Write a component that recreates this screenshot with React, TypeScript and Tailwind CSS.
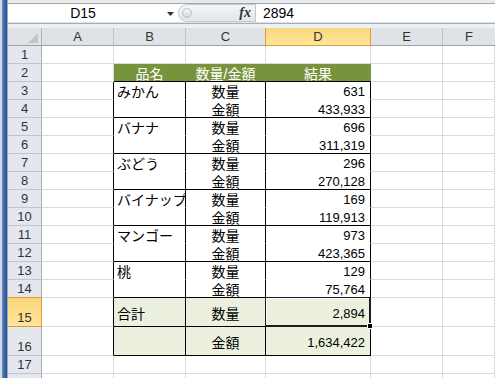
import React from 'react';

type Line = [string, string, string];

const data: Line[] = [
  ['みかん', '数量', '631'],
  ['', '金額', '433,933'],
  ['バナナ', '数量', '696'],
  ['', '金額', '311,319'],
  ['ぶどう', '数量', '296'],
  ['', '金額', '270,128'],
  ['バイナップル', '数量', '169'],
  ['', '金額', '119,913'],
  ['マンゴー', '数量', '973'],
  ['', '金額', '423,365'],
  ['桃', '数量', '129'],
  ['', '金額', '75,764'],
];

const RowHead: React.FC<{ n: number; tall?: boolean; sel?: boolean; orangeBottom?: boolean }> = ({ n, tall, sel, orangeBottom }) => (
  <div
    className={
      'flex w-[34px] shrink-0 items-end justify-center border-r border-b pb-[1px] text-[13px] leading-[14px] text-[#333] ' +
      (tall ? 'h-[29px] ' : 'h-[18px] ') +
      (sel
        ? 'border-r-[#e29a35] border-b-[#e29a35] bg-gradient-to-b from-[#f9d67a] to-[#ffe69b]'
        : orangeBottom
        ? 'border-r-[#a7abb0] border-b-[#e29a35] bg-[#e4e8ee]'
        : 'border-r-[#a7abb0] border-b-[#c2c6cb] bg-[#e4e8ee]')
    }
  >
    {n}
  </div>
);

const Blank: React.FC<{ w: string; right?: string }> = ({ w, right }) => (
  <div className={'h-full shrink-0 border-r border-b border-b-[#dadada] bg-white ' + w + ' ' + (right || 'border-r-[#dadada]')} />
);

const Row: React.FC<{ children: React.ReactNode; tall?: boolean }> = ({ children, tall }) => (
  <div className={'flex ' + (tall ? 'h-[29px]' : 'h-[18px]')}>{children}</div>
);

export default function App() {
  return (
    <div className="flex h-[378px] w-[495px] overflow-hidden bg-white font-['Liberation_Sans','Noto_Sans_CJK_JP',sans-serif] text-black">
      {/* window edge */}
      <div className="flex w-[8px] shrink-0">
        <div className="w-[2px] bg-[#cfd7e3]" />
        <div className="w-[5px] bg-gradient-to-r from-[#6d8fc4] via-[#3f64a6] to-[#2c4f8f]" />
        <div className="w-px bg-[#98a9c4]" />
      </div>

      <div className="w-[487px] shrink-0">
        {/* formula bar */}
        <div className="h-[3px] bg-[#e6eaef]" />
        <div className="h-px bg-[#a3a7ac]" />
        <div className="flex h-[18px]">
          <div className="relative flex w-[170px] items-center bg-white">
            <span className="w-[150px] text-center text-[14px] leading-[18px]">D15</span>
            <svg className="absolute left-[159px] top-[8px]" width="7" height="4" viewBox="0 0 7 4">
              <polygon points="0,0 7,0 3.5,4" fill="#333" />
            </svg>
          </div>
          <div className="relative flex w-[77px] items-center justify-end rounded-l-full border border-r-0 border-[#c6cacf] bg-gradient-to-b from-[#f4f5f7] to-[#e2e5e9] pr-[4px]">
            <div className="absolute left-[3px] top-[3px] h-[10px] w-[10px] rounded-full border border-[#b9bdc2] bg-gradient-to-b from-[#f7f7f7] to-[#d4d7db]" />
            <span className="font-['Liberation_Serif',serif] text-[14px] font-bold italic leading-[16px] text-[#333]">fx</span>
          </div>
          <div className="w-px bg-[#c3c7cc]" />
          <div className="flex flex-1 items-center bg-white pl-[7px] text-[14px] leading-[18px]">2894</div>
        </div>
        <div className="h-px bg-[#dde1e6]" />
        <div className="h-px bg-[#a9adb2]" />
        <div className="h-[4px] bg-[#eef1f4]" />

        {/* column headers */}
        <div className="flex h-[18px] text-[13px] leading-[17px] text-[#333]">
          <div className="relative w-[34px] shrink-0 border-r border-b border-r-[#b1b5ba] border-b-[#9ea2a6] bg-[#dfe3e8]">
            <svg className="absolute left-[20px] top-[5px]" width="10" height="10" viewBox="0 0 10 10">
              <polygon points="10,0 10,10 0,10" fill="#c2c6cb" />
            </svg>
          </div>
          <div className="w-[72px] shrink-0 border-r border-b border-r-[#bfc3c8] border-b-[#9ea2a6] bg-[#dfe3e8] text-center">A</div>
          <div className="w-[72px] shrink-0 border-r border-b border-r-[#bfc3c8] border-b-[#9ea2a6] bg-[#dfe3e8] text-center">B</div>
          <div className="w-[80px] shrink-0 border-r border-b border-r-[#e29a35] border-b-[#9ea2a6] bg-[#dfe3e8] text-center">C</div>
          <div className="w-[105px] shrink-0 border-r border-b border-r-[#e29a35] border-b-[#e29a35] bg-gradient-to-b from-[#f9d67a] to-[#ffe69b] text-center">D</div>
          <div className="w-[72px] shrink-0 border-r border-b border-r-[#bfc3c8] border-b-[#9ea2a6] bg-[#dfe3e8] text-center">E</div>
          <div className="w-[52px] shrink-0 border-b border-b-[#9ea2a6] bg-[#dfe3e8] text-center">F</div>
        </div>

        {/* row 1 */}
        <Row>
          <RowHead n={1} />
          <Blank w="w-[72px]" />
          <Blank w="w-[72px]" />
          <Blank w="w-[80px]" />
          <Blank w="w-[105px]" />
          <Blank w="w-[72px]" />
          <Blank w="w-[52px]" />
        </Row>

        {/* row 2: table header */}
        <Row>
          <RowHead n={2} />
          <Blank w="w-[72px]" />
          <div className="flex w-[72px] shrink-0 items-center justify-center border-r border-b border-r-[#77933c] border-b-black bg-[#77933c] pt-[2px] text-[14px] leading-[16px] text-white">品名</div>
          <div className="flex w-[80px] shrink-0 items-center justify-center border-r border-b border-r-[#77933c] border-b-black bg-[#77933c] pt-[2px] text-[14px] leading-[16px] text-white">数量/金額</div>
          <div className="flex w-[105px] shrink-0 items-center justify-center border-r border-b border-r-[#77933c] border-b-black bg-[#77933c] pt-[2px] text-[14px] leading-[16px] text-white">結果</div>
          <Blank w="w-[72px]" />
          <Blank w="w-[52px]" />
        </Row>

        {/* rows 3-14 */}
        {data.map(([b, c, d], i) => {
          const n = i + 3;
          const bottom = n % 2 === 0 ? 'border-b-black' : 'border-b-white';
          return (
            <Row key={n}>
              <RowHead n={n} orangeBottom={n === 14} />
              <Blank w="w-[72px]" right="border-r-black" />
              <div className={'flex w-[72px] shrink-0 items-center overflow-hidden whitespace-nowrap border-r border-b border-r-black pl-[3px] pt-[2px] text-[14px] leading-[16px] ' + bottom}>{b}</div>
              <div className={'flex w-[80px] shrink-0 items-center justify-center border-r border-b border-r-black pt-[2px] text-[14px] leading-[16px] ' + bottom}>{c}</div>
              <div className={'flex w-[105px] shrink-0 items-center justify-end border-r border-b border-r-black pr-[5px] pt-[2px] text-[13px] leading-[16px] ' + bottom}>{d}</div>
              <Blank w="w-[72px]" />
              <Blank w="w-[52px]" />
            </Row>
          );
        })}

        {/* row 15 */}
        <Row tall>
          <RowHead n={15} tall sel />
          <Blank w="w-[72px]" right="border-r-black" />
          <div className="flex w-[72px] shrink-0 items-center border-r border-b border-black bg-[#ebf1de] pl-[3px] pt-[3px] text-[14px] leading-[16px]">合計</div>
          <div className="flex w-[80px] shrink-0 items-center justify-center border-r border-b border-black bg-[#ebf1de] pt-[3px] text-[14px] leading-[16px]">数量</div>
          <div className="relative flex w-[105px] shrink-0 items-center justify-end border-r border-b border-black bg-[#ebf1de] pr-[5px] pt-[3px] text-[13px] leading-[16px]">
            2,894
            <div className="absolute -left-px -top-px -right-px -bottom-px border-t border-l border-r-2 border-b-2 border-[#1c1c1c]">
              <div className="absolute inset-0 border-t border-l border-white" />
            </div>
            <div className="absolute left-[101px] top-[25px] h-[6px] w-[6px] border border-white bg-black" />
          </div>
          <Blank w="w-[72px]" />
          <Blank w="w-[52px]" />
        </Row>

        {/* row 16 */}
        <Row tall>
          <RowHead n={16} tall />
          <Blank w="w-[72px]" right="border-r-black" />
          <div className="w-[72px] shrink-0 border-r border-b border-black bg-[#ebf1de]" />
          <div className="flex w-[80px] shrink-0 items-center justify-center border-r border-b border-black bg-[#ebf1de] pt-[3px] text-[14px] leading-[16px]">金額</div>
          <div className="flex w-[105px] shrink-0 items-center justify-end border-r border-b border-black bg-[#ebf1de] pr-[5px] pt-[3px] text-[13px] leading-[16px]">1,634,422</div>
          <Blank w="w-[72px]" />
          <Blank w="w-[52px]" />
        </Row>

        {/* row 17, with the top of row 18 below it */}
        <Row>
          <RowHead n={17} />
          <Blank w="w-[72px]" />
          <Blank w="w-[72px]" />
          <Blank w="w-[80px]" />
          <Blank w="w-[105px]" />
          <Blank w="w-[72px]" />
          <Blank w="w-[52px]" />
        </Row>
        <div className="flex h-[18px]">
          <div className="w-[34px] shrink-0 border-r border-r-[#a7abb0] bg-[#e4e8ee]" />
          <Blank w="w-[72px]" />
          <Blank w="w-[72px]" />
          <Blank w="w-[80px]" />
          <Blank w="w-[105px]" />
          <Blank w="w-[72px]" />
          <Blank w="w-[52px]" />
        </div>
      </div>
    </div>
  );
}
